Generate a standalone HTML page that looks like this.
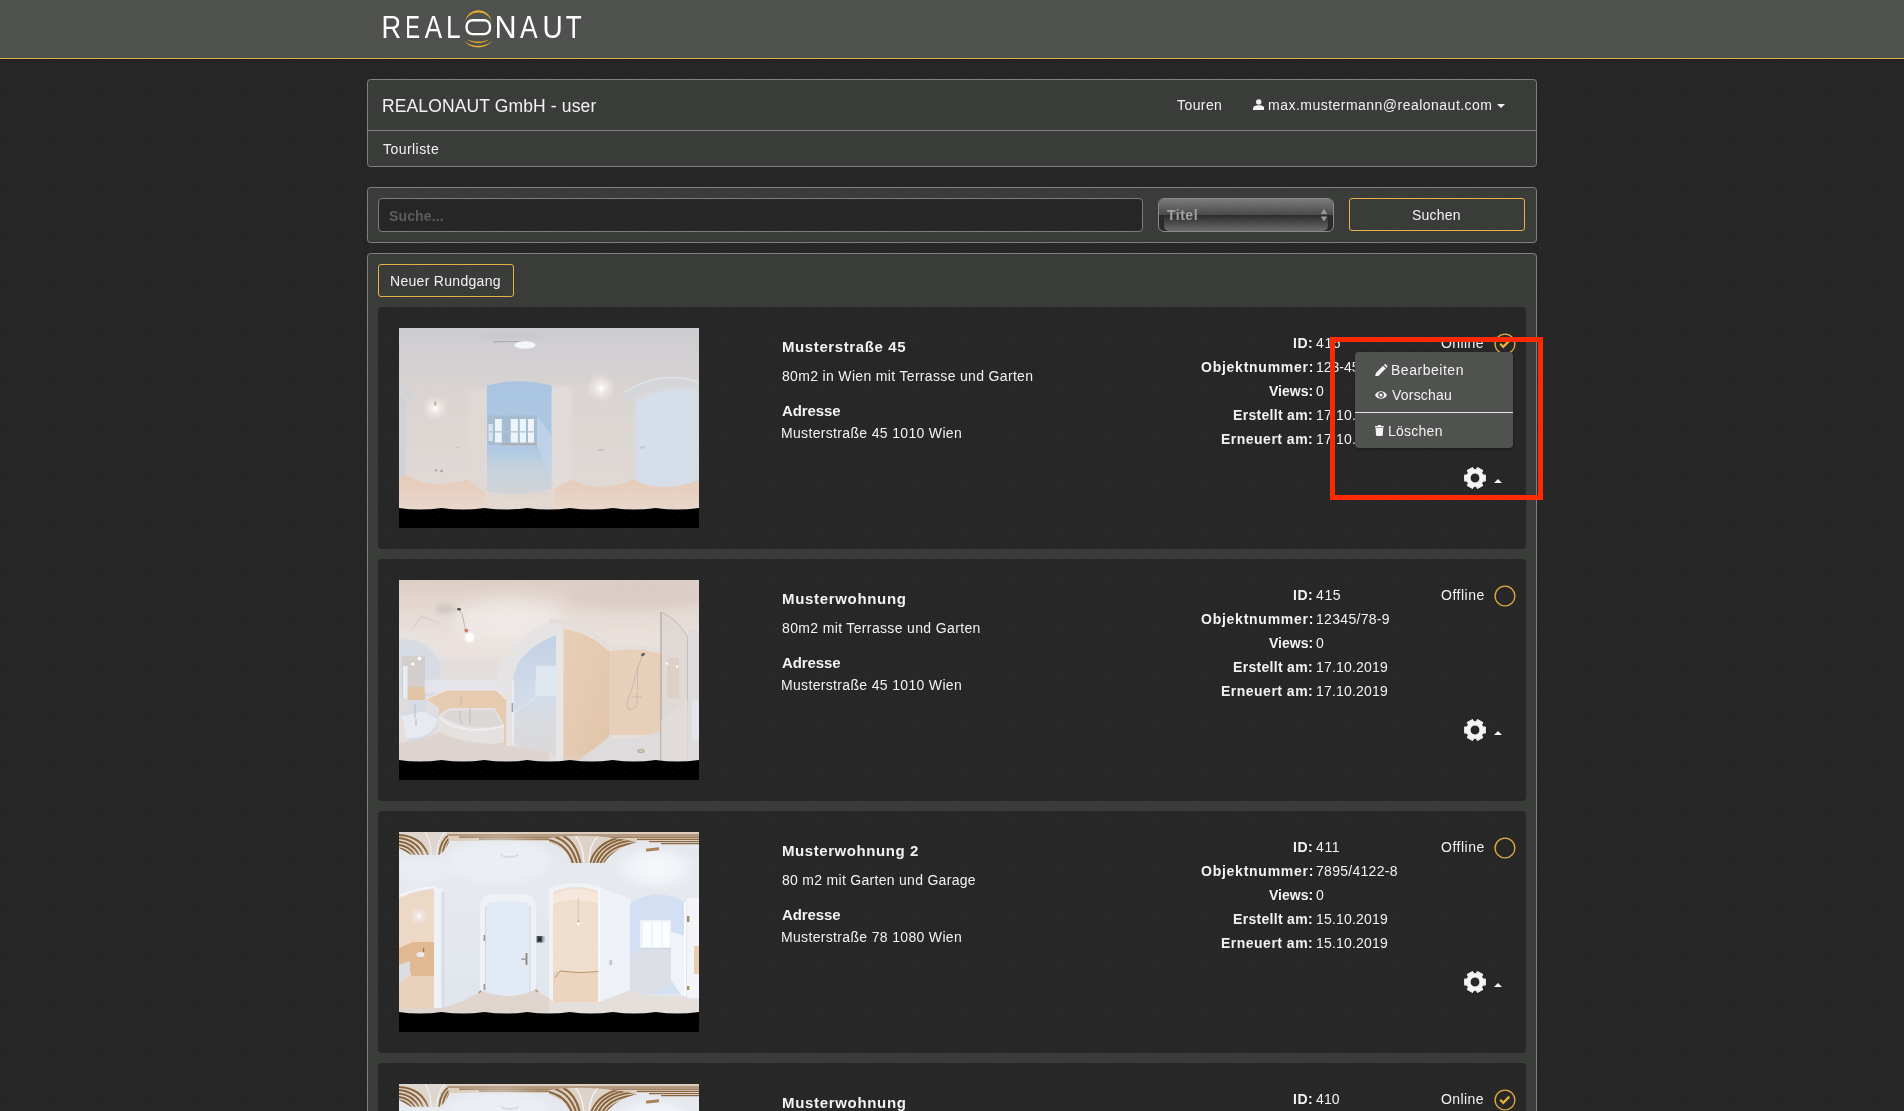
<!DOCTYPE html>
<html lang="de"><head><meta charset="utf-8"><title>REALONAUT - Tourliste</title>
<style>
html,body{margin:0;padding:0;}
body{width:1904px;height:1111px;overflow:hidden;position:relative;background:#262626;
 font-family:"Liberation Sans",sans-serif;color:#f2f2f2;}
.abs,.t{position:absolute;}
.t{white-space:nowrap;line-height:1;will-change:transform;}
#hdr{left:0;top:0;width:1904px;height:58px;background:#4f514e;}
#hdrline{left:0;top:58px;width:1904px;height:1px;background:#e3b34a;}
#hdrline2{left:0;top:59px;width:1904px;height:1px;background:#1d1f24;}
.panel{position:absolute;left:367px;width:1170px;box-sizing:border-box;border:1px solid #808080;border-radius:3.5px;background:#3a3c3a;}
.card{position:absolute;left:378px;width:1148px;height:242px;background:#272727;border-radius:4px;}
.thumb{position:absolute;left:399px;width:300px;height:200px;background:#d9d4d4;overflow:hidden;}
.btn{position:absolute;box-sizing:border-box;border:1px solid #e3b34a;border-radius:3px;background:#3a3c3a;}
</style></head><body>
<svg width="0" height="0" style="position:absolute"><defs>
<filter id="b05" x="-20%" y="-20%" width="140%" height="140%"><feGaussianBlur stdDeviation="0.5"/></filter>
<filter id="b1" x="-20%" y="-20%" width="140%" height="140%"><feGaussianBlur stdDeviation="1"/></filter>
<filter id="b2" x="-30%" y="-30%" width="160%" height="160%"><feGaussianBlur stdDeviation="2"/></filter>
<filter id="b4" x="-50%" y="-50%" width="200%" height="200%"><feGaussianBlur stdDeviation="4"/></filter>
<filter id="b8" x="-50%" y="-50%" width="200%" height="200%"><feGaussianBlur stdDeviation="8"/></filter>
<radialGradient id="glow"><stop offset="0" stop-color="#fff" stop-opacity="1"/><stop offset="0.25" stop-color="#f4ece8" stop-opacity=".85"/><stop offset="1" stop-color="#e6d8d0" stop-opacity="0"/></radialGradient>
<linearGradient id="i1bg" x1="0" y1="0" x2="0" y2="1"><stop offset="0" stop-color="#b6b4b9"/><stop offset=".17" stop-color="#bebabd"/><stop offset=".3" stop-color="#c6bebc"/><stop offset=".5" stop-color="#ccc2be"/><stop offset=".8" stop-color="#d0c6c1"/></linearGradient>
<linearGradient id="i1fl" x1="0" y1="0" x2="0" y2="1"><stop offset="0" stop-color="#d9b196"/><stop offset="1" stop-color="#dfc4b3"/></linearGradient>
<linearGradient id="i1door" x1="0" y1="0" x2="0" y2="1"><stop offset="0" stop-color="#7fa8d2"/><stop offset=".6" stop-color="#88afd6"/><stop offset=".75" stop-color="#a9bccd"/><stop offset="1" stop-color="#bbbfc3"/></linearGradient>
<path id="scal" d="M0 181.6 Q10 181.9 20.5 180.6 Q21.4 180 22.3 180.6 Q32 181.9 42.8 181.6 V200 H0Z"/>
</defs></svg>

<div class="abs" id="hdr"></div><div class="abs" id="hdrline"></div><div class="abs" id="hdrline2"></div>
<svg class="abs" style="left:0;top:0;will-change:transform;" width="620" height="58" viewBox="0 0 620 58" aria-label="REALONAUT">
<g fill="#ffffff" font-family="Liberation Sans, sans-serif"><text transform="translate(381.56 37.8) scale(0.863 1)" font-size="31.6">R</text><text transform="translate(405.18 37.8) scale(0.701 1)" font-size="31.6">E</text><text transform="translate(424.70 37.8) scale(0.823 1)" font-size="31.6">A</text><text transform="translate(446.05 37.8) scale(0.829 1)" font-size="31.6">L</text><text transform="translate(494.39 37.8) scale(0.969 1)" font-size="31.6">N</text><text transform="translate(519.95 37.8) scale(0.835 1)" font-size="31.6">A</text><text transform="translate(542.54 37.8) scale(0.886 1)" font-size="31.6">U</text><text transform="translate(565.66 37.8) scale(0.826 1)" font-size="31.6">T</text></g>
<rect x="466.6" y="20.2" width="23.4" height="13.9" rx="6" ry="6" fill="none" stroke="#ffffff" stroke-width="2.4"/>
<g fill="#e3ab33">
<path d="M464.9 22.2 C467.5 6.2 489.3 6.2 491.9 22.2 C487.6 9.4 469.2 9.4 464.9 22.2Z"/>
<path d="M464.3 41.0 C470.5 49.6 486.0 49.6 492.0 41.0 C486.0 47.3 470.5 47.3 464.3 41.0Z"/>
<path d="M467.0 39.2 C472.5 44.2 484.0 44.2 489.0 39.2 C484.0 42.4 472.5 42.4 467.0 39.2Z"/>
</g></svg>
<div class="panel" style="top:79px;height:88px;"></div>
<div class="abs" style="left:368px;top:130px;width:1168px;height:1px;background:#808080;"></div>
<div class="t" id="title" style="top:97.99px;font-size:17.5px;color:#f2f2f2;letter-spacing:0.127px;left:382.00px;">REALONAUT GmbH - user</div>
<div class="t" id="tourliste" style="top:142.15px;font-size:14px;color:#f2f2f2;letter-spacing:0.450px;left:382.50px;">Tourliste</div>
<div class="t" id="touren" style="top:98.15px;font-size:14px;color:#f2f2f2;letter-spacing:0.420px;left:1177.40px;">Touren</div>
<svg class="abs" style="left:1252.6px;top:99.2px;" width="11.5" height="11" viewBox="0 0 11.5 11"><circle cx="5.75" cy="2.9" r="2.7" fill="#f2f2f2"/><path d="M0 11 V9.6 C0 7.4 2.2 6.3 5.75 6.3 C9.3 6.3 11.5 7.4 11.5 9.6 V11Z" fill="#f2f2f2"/></svg>
<div class="t" id="email" style="top:98.15px;font-size:14px;color:#f2f2f2;letter-spacing:0.480px;left:1267.60px;">max.mustermann@realonaut.com</div>
<div class="abs" style="left:1497px;top:104px;width:0;height:0;border-left:4px solid transparent;border-right:4px solid transparent;border-top:4px solid #f2f2f2;"></div>
<div class="panel" style="top:187px;height:56px;"></div>
<div class="abs" style="left:378px;top:198px;width:765px;height:34px;box-sizing:border-box;border:1px solid #7d7d7d;border-radius:4px;background:#262626;"></div>
<div class="t" id="suche" style="top:208.75px;font-size:14px;color:#5c5c5c;font-weight:700;letter-spacing:0.143px;left:389.20px;">Suche...</div>
<div class="abs" style="left:1158px;top:198px;width:176px;height:34px;box-sizing:border-box;border:1px solid #8a8a8a;border-radius:6px;overflow:hidden;background:#2a2a2a;">
<div class="abs" style="left:0;top:0;width:174px;height:16px;background:linear-gradient(#7b7b7b,#4a4a4a);"></div>
<div class="abs" style="left:5px;top:16px;width:164px;height:16px;border-radius:0 0 5px 5px;background:linear-gradient(#2b2b2b,#6a6a6a);"></div>
<svg class="abs" style="left:161px;top:9px;" width="8" height="15" viewBox="0 0 8 15"><path d="M4 0.8 L7.2 6 H0.8Z M4 13.6 L0.8 8.4 H7.2Z" fill="#999"/></svg>
</div>
<div class="t" id="titel" style="top:207.90px;font-size:14px;color:#a2a2a2;font-weight:700;letter-spacing:0.500px;left:1167.00px;">Titel</div>
<div class="btn" style="left:1349px;top:198px;width:176px;height:33px;"></div>
<div class="t" id="suchen" style="top:208.15px;font-size:14px;color:#f2f2f2;letter-spacing:0.200px;left:1412.00px;">Suchen</div>
<div class="panel" style="top:253px;height:900px;"></div>
<div class="btn" style="left:378px;top:264px;width:136px;height:33px;"></div>
<div class="t" id="neuer" style="top:274.40px;font-size:14px;color:#f2f2f2;letter-spacing:0.300px;left:390.20px;">Neuer Rundgang</div>
<div class="card" style="top:307px;"></div>
<div class="thumb" style="top:328px;"><svg width="300" height="200" viewBox="0 0 300 200" style="display:block">
<rect width="300" height="200" fill="url(#i1bg)"/>
<!-- ceiling shading -->
<ellipse cx="112" cy="8" rx="34" ry="5" fill="#aeadb3" opacity=".7" filter="url(#b2)"/>
<path d="M94 14.2 Q108 12.6 124 14" stroke="#77726f" stroke-width="1.3" fill="none" filter="url(#b05)" opacity=".75"/>
<ellipse cx="126" cy="17" rx="10.5" ry="3.8" fill="#edf3fb" filter="url(#b05)"/>
<!-- far-left doorway -->
<path d="M0 56 Q10 58 16 70 L10 72 Q6 64 0 62Z" fill="#bdbdc3" filter="url(#b05)"/>
<rect x="0" y="68" width="7" height="84" fill="#b7bcc6" filter="url(#b1)"/>
<!-- right room under arch -->
<path d="M236 200 V72 Q262 55 300 61 V200Z" fill="#c2cede" filter="url(#b2)"/>
<path d="M224 66 Q262 40 300 55 L300 62 Q262 50 232 71Z" fill="#c0c2c8" filter="url(#b05)"/>
<path d="M224 65 Q262 40.5 300 54.5" stroke="#d4d8de" stroke-width="1.2" fill="none" filter="url(#b05)"/>
<!-- walls light areas -->
<rect x="152" y="58" width="20" height="108" fill="#d3cac6" filter="url(#b2)"/>
<rect x="70" y="62" width="18" height="100" fill="#d0c6c1" filter="url(#b2)"/>
<!-- lamps -->
<circle cx="36" cy="80" r="13" fill="url(#glow)"/>
<rect x="35" y="73.5" width="2.4" height="4" fill="#b08a70" filter="url(#b05)"/>
<circle cx="202" cy="60" r="15" fill="url(#glow)"/>
<circle cx="201.8" cy="61.8" r="1.3" fill="#fff"/>
<!-- floor -->
<path d="M0 150.5 L7.2 146.4 Q22 156.5 38.7 155.8 Q54 155.5 68.4 151.8 Q78 158 85.5 164 L88 164 V182 H0Z" fill="url(#i1fl)"/>
<path d="M153 162.5 Q164 156 171.6 151.4 Q186 159 204 158.5 Q221 158 234.7 151.4 Q250 159.5 267 159 Q285 158 300 152 V182 H153Z" fill="url(#i1fl)"/>
<rect x="86" y="163" width="70" height="19" fill="#d6c6bd"/>
<!-- blue doorway -->
<path d="M88 166 V57.5 Q118 49 152.5 57.5 V162 Q120 171 88 166Z" fill="url(#i1door)"/>
<path d="M88 163 Q120 170.5 153 160.5 L153 167 Q120 175 88 168Z" fill="#d3c4bb" filter="url(#b05)"/>
<!-- window -->
<rect x="88.6" y="87.5" width="49.5" height="29.5" fill="#7b9bba"/>
<g fill="#e4effb"><rect x="96" y="91" width="6.8" height="23.5"/><rect x="111.7" y="91" width="7.2" height="23.5"/><rect x="120.8" y="91" width="6.2" height="23.5"/><rect x="129" y="91" width="6" height="23.5"/><rect x="89.4" y="96" width="4.4" height="17" opacity=".7"/></g>
<rect x="88.6" y="103" width="49.5" height="1.6" fill="#88a6c3" opacity=".8"/>
<rect x="103" y="115.6" width="35" height="1.6" fill="#8c7f78"/>
<path d="M138 88 L152.5 108 V150 L138 117Z" fill="#a7c2dd" opacity=".7"/>
<!-- outlets -->
<circle cx="36.8" cy="142.3" r="1.1" fill="#6e6a68"/><circle cx="42.6" cy="143" r="1.2" fill="#6e6a68"/>
<rect x="56" y="118.6" width="5" height="1.6" fill="#b5aba6"/><rect x="199" y="121" width="6" height="2" fill="#aaa4a3"/><rect x="241" y="118.5" width="5" height="2" fill="#a9acb3"/>
<rect class="veil" width="300" height="184" fill="#fff" opacity="0.33"/>
<path d="M-0.3 179.9 Q21.1 183.3 42.5 179.9 Q63.9 183.3 85.4 179.9 Q106.8 183.3 128.2 179.9 Q149.6 183.3 171.0 179.9 Q192.4 183.3 213.8 179.9 Q235.3 183.3 256.7 179.9 Q278.1 183.3 299.5 179.9 H301 V200 H-1Z" fill="#000"/>
</svg></div>
<div class="t" id="c0title" style="top:338.90px;font-size:15px;color:#f2f2f2;font-weight:700;letter-spacing:0.607px;left:781.75px;">Musterstraße 45</div>
<div class="t" id="c0desc" style="top:368.75px;font-size:14px;color:#f2f2f2;letter-spacing:0.332px;left:782.00px;">80m2 in Wien mit Terrasse und Garten</div>
<div class="t" id="c0adr" style="top:403.20px;font-size:15px;color:#f2f2f2;font-weight:700;letter-spacing:-0.082px;left:782.00px;">Adresse</div>
<div class="t" id="c0addr" style="top:426.05px;font-size:14px;color:#f2f2f2;letter-spacing:0.333px;left:781.00px;">Musterstraße 45 1010 Wien</div>
<div class="t" id="c0l0" style="top:336.15px;font-size:14px;color:#f2f2f2;font-weight:700;letter-spacing:0.500px;right:590.50px;">ID:</div>
<div class="t" id="c0v0" style="top:336.15px;font-size:14px;color:#f2f2f2;letter-spacing:0.600px;left:1316.10px;">416</div>
<div class="t" id="c0l1" style="top:360.15px;font-size:14px;color:#f2f2f2;font-weight:700;letter-spacing:0.750px;right:590.25px;">Objektnummer:</div>
<div class="t" id="c0v1" style="top:360.15px;font-size:14px;color:#f2f2f2;left:1316.30px;">123-456</div>
<div class="t" id="c0l2" style="top:384.15px;font-size:14px;color:#f2f2f2;font-weight:700;right:591.00px;">Views:</div>
<div class="t" id="c0v2" style="top:384.15px;font-size:14px;color:#f2f2f2;left:1316.10px;">0</div>
<div class="t" id="c0l3" style="top:408.15px;font-size:14px;color:#f2f2f2;font-weight:700;letter-spacing:0.307px;right:590.69px;">Erstellt am:</div>
<div class="t" id="c0v3" style="top:408.15px;font-size:14px;color:#f2f2f2;letter-spacing:0.199px;left:1316.10px;">17.10.2019</div>
<div class="t" id="c0l4" style="top:432.15px;font-size:14px;color:#f2f2f2;font-weight:700;letter-spacing:0.489px;right:590.51px;">Erneuert am:</div>
<div class="t" id="c0v4" style="top:432.15px;font-size:14px;color:#f2f2f2;letter-spacing:0.199px;left:1316.10px;">17.10.2019</div>
<div class="t" id="c0st" style="top:336.15px;font-size:14px;color:#f2f2f2;letter-spacing:0.400px;right:419.70px;">Online</div>
<svg class="abs" style="left:1494px;top:332.5px;" width="22" height="22" viewBox="0 0 22 22"><circle cx="11" cy="11" r="9.9" fill="none" stroke="#e0aa3c" stroke-width="1.35"/><path d="M6.2 10.8 L9.3 13.9 L15.3 7.6" fill="none" stroke="#e6b03a" stroke-width="2.3"/></svg>
<svg class="abs" style="left:1463.3px;top:465.55px;" width="24" height="24" viewBox="0 0 24 24"><path d="M19.82 8.92 L22.31 9.14 L22.31 14.86 L19.82 15.08 L18.57 17.23 L19.63 19.50 L14.68 22.36 L13.24 20.31 L10.76 20.31 L9.32 22.36 L4.37 19.50 L5.43 17.23 L4.18 15.08 L1.69 14.86 L1.69 9.14 L4.18 8.92 L5.43 6.77 L4.37 4.50 L9.32 1.64 L10.76 3.69 L13.24 3.69 L14.68 1.64 L19.63 4.50 L18.57 6.77Z M7.00 12.00 a5.0 5.0 0 1 0 10.0 0 a5.0 5.0 0 1 0 -10.0 0Z" fill="#f4f4f4" fill-rule="evenodd" stroke="#f4f4f4" stroke-width="1.1" stroke-linejoin="round"/></svg>
<div class="abs" style="left:1494px;top:478.7px;width:0;height:0;border-left:4.2px solid transparent;border-right:4.2px solid transparent;border-bottom:4.4px solid #f4f4f4;"></div>
<div class="card" style="top:559px;"></div>
<div class="thumb" style="top:580px;"><svg width="300" height="200" viewBox="0 0 300 200" style="display:block">
<defs>
<linearGradient id="i2bg" x1="0" y1="0" x2="0" y2="1"><stop offset="0" stop-color="#d5c2b8"/><stop offset=".12" stop-color="#ddcdc5"/><stop offset=".28" stop-color="#e5d9d3"/><stop offset=".5" stop-color="#e5dcd7"/><stop offset="1" stop-color="#ddd3ce"/></linearGradient>
<linearGradient id="i2p" x1="0" y1="0" x2="1" y2="1"><stop offset="0" stop-color="#e4c3a4"/><stop offset="1" stop-color="#d9b796"/></linearGradient>
<linearGradient id="i2d" x1="0" y1="0" x2="0" y2="1"><stop offset="0" stop-color="#b4c7df"/><stop offset=".5" stop-color="#c6d3e4"/><stop offset=".7" stop-color="#cfd3da"/><stop offset="1" stop-color="#d2cfd0"/></linearGradient>
</defs>
<rect width="300" height="200" fill="url(#i2bg)"/>
<!-- ceiling shadow + lamp -->
<ellipse cx="47" cy="29" rx="11" ry="5" fill="#bfb4b0" opacity=".8" filter="url(#b2)"/>
<ellipse cx="236" cy="16" rx="70" ry="14" fill="#cbbbb4" opacity=".6" filter="url(#b4)"/><ellipse cx="110" cy="40" rx="55" ry="20" fill="#efeae8" opacity=".7" filter="url(#b8)"/>
<!-- left arch + blueish wall -->
<path d="M0 60 Q26 56 42 76 V135 H0Z" fill="#cdd3dd" filter="url(#b1)"/>
<path d="M0 50 Q28 50 44 76 L40 80 Q26 58 0 58Z" fill="#e0dbd9" filter="url(#b05)"/>
<path d="M14 48 L23 36 L40 43" stroke="#bfb4b0" stroke-width=".8" fill="none"/>
<!-- mirror -->
<rect x="3" y="76" width="23" height="44" fill="#c9c2c0"/>
<rect x="8" y="107" width="18" height="13" fill="#dbb691"/>
<rect x="4" y="86" width="4.5" height="40" fill="#e3e8f2"/>
<circle cx="20.5" cy="78.5" r="2" fill="#fff" filter="url(#b05)"/><circle cx="13.8" cy="84" r="1.6" fill="#fff" filter="url(#b05)"/>
<!-- center-left wall -->
<rect x="42" y="78" width="58" height="34" fill="#dcd6d4" filter="url(#b2)"/>
<rect x="26" y="100" width="84" height="13" fill="#dcdfe6" filter="url(#b1)"/>
<!-- peach tile band -->
<path d="M27 119 L47 110 H98 L107 119 V165 H98 V137 H40 V128Z" fill="#e2be9e"/>
<path d="M27 119 L47 110 H98 L107 119" stroke="#ebe6e4" stroke-width="1.2" fill="none"/>
<path d="M27 119 L40 128 V150 L27 140Z" fill="#d6d6dc"/>
<!-- bathtub -->
<path d="M40 136 Q45 129 52 128 H96 L105 145 V163 Q75 166 58 158 Q44 150 40 136Z" fill="#dedad9"/>
<path d="M43 136 Q48 131 53 130.5 H95 L103 145 Q80 150 62 145 Q50 141 43 136Z" fill="#d3cecd"/>
<path d="M40 137 Q52 148 70 149.5 Q90 150.5 105 146" stroke="#ebe9ea" stroke-width="2" fill="none"/>
<path d="M62 116 V126 M71 128 V144 M61 131 Q60 140 64 144" stroke="#a79c94" stroke-width=".7" fill="none"/>
<!-- sink -->
<path d="M3 137 L25 131 L39 140 Q36 152 22 157 L8 159Z" fill="#e2e5ed"/>
<path d="M8 159 L22 157 Q36 152 39 141 L39 147 Q34 158 8 163Z" fill="#cfd3dd"/>
<path d="M16 124 V138 M17 139 V146" stroke="#b8b2b0" stroke-width="1.2"/>
<rect x="0" y="118" width="9" height="14" fill="#d8d4d4"/>
<!-- floor -->
<path d="M0 163 Q20 162 40 152 Q60 163 105 165 L150 168 V182 H0Z" fill="#d5cac5"/>
<!-- door: frame + blue -->
<path d="M108 166 V113 L98.5 102 Q103 62 150 43 H158 L165 50 V168Z" fill="#dfdcdc"/>
<path d="M114 100 Q118 70 157 55 V174 Q135 172 114 163Z" fill="url(#i2d)"/>
<path d="M114 100 V163" stroke="#e6e8ee" stroke-width="2.2"/>
<path d="M114 133 L137 118 V100" stroke="#e2e6ee" stroke-width="1" fill="none" opacity=".8"/>
<rect x="137" y="86" width="20" height="30" fill="#dfe7f2" opacity=".75" filter="url(#b05)"/>
<rect x="112.6" y="123" width="1.6" height="9" fill="#8d8a8c"/>
<!-- door frame right (white) -->
<path d="M157 52 L164.5 49 V182 H157Z" fill="#e1dfe0"/>
<!-- big peach panel -->
<path d="M164.5 49 Q190 52 209.5 71 V182 H164.5Z" fill="url(#i2p)"/>
<!-- cornice -->
<path d="M150 41 Q188 42 210 68 Q238 64 262 72" stroke="#ddd6d2" stroke-width="4.5" fill="none" filter="url(#b05)"/>
<!-- shower wall -->
<path d="M209.5 71 Q238 67 262 74 V155 H209.5Z" fill="#e3c4a8"/>
<path d="M209.5 71 V157" stroke="#cfb29b" stroke-width="1" opacity=".7"/>
<!-- shower tray -->
<path d="M184 176 Q200 166 209.5 157 Q232 163 262 151 V182 H180Z" fill="#d6d3d4"/>
<path d="M164.5 176 H186 L180 182 H164.5Z" fill="#d9c2b0"/>
<ellipse cx="242" cy="171" rx="3.6" ry="2.2" fill="#a8987f"/><ellipse cx="242" cy="171" rx="2" ry="1.1" fill="#cbbfae"/>
<!-- shower fittings -->
<ellipse cx="244" cy="74.5" rx="2.2" ry="1.4" fill="#3c3a38" transform="rotate(-35 244 74.5)"/>
<path d="M243 76 Q236 96 232 112 Q224 128 232 130 Q240 128 238 112 M238.5 86 V110 M233 117 H243" stroke="#b3a69d" stroke-width=".9" fill="none"/>
<!-- glass -->
<path d="M262 32 Q280 40 288.6 57 V182 H262Z" fill="#d0c8c5" opacity=".55"/>
<path d="M262 32 V182" stroke="#8e8078" stroke-width="1"/>
<path d="M262 32 Q280 40 288.6 57 V182" stroke="#aaa09b" stroke-width=".8" fill="none"/>
<path d="M262 140 L289 120 V182 H262Z" fill="#dcd7d6" opacity=".6"/>
<rect x="268" y="78" width="12" height="40" fill="#d6c0ae" opacity=".7" filter="url(#b05)"/>
<circle cx="268" cy="83.5" r="1.2" fill="#fff"/><circle cx="278" cy="86.5" r="1.2" fill="#fff"/>
<!-- far right -->
<rect x="289" y="50" width="11" height="132" fill="#d8d3d2"/>
<rect x="293" y="120" width="7" height="40" fill="#dfe2ea" opacity=".8"/>
<!-- hanging lamp -->
<path d="M60 29.5 Q64 34 64.5 40 Q65 46 67 49.5" stroke="#9b938f" stroke-width=".8" fill="none"/>
<ellipse cx="60" cy="29.3" rx="2" ry="1.2" fill="#1d1b1a"/>
<path d="M65.5 49 L69.5 49.5 L68.5 52.5 L66 52.3Z" fill="#b0482a"/>
<circle cx="70.6" cy="57.2" r="5.6" fill="#fff" opacity=".55" filter="url(#b1)"/><circle cx="70.6" cy="57.2" r="3.9" fill="#fff"/>
<rect class="veil" width="300" height="184" fill="#fff" opacity="0.2"/>
<path d="M-0.3 179.9 Q21.1 183.3 42.5 179.9 Q63.9 183.3 85.4 179.9 Q106.8 183.3 128.2 179.9 Q149.6 183.3 171.0 179.9 Q192.4 183.3 213.8 179.9 Q235.3 183.3 256.7 179.9 Q278.1 183.3 299.5 179.9 H301 V200 H-1Z" fill="#000"/>
</svg></div>
<div class="t" id="c1title" style="top:590.90px;font-size:15px;color:#f2f2f2;font-weight:700;letter-spacing:0.676px;left:781.75px;">Musterwohnung</div>
<div class="t" id="c1desc" style="top:620.75px;font-size:14px;color:#f2f2f2;letter-spacing:0.351px;left:782.00px;">80m2 mit Terrasse und Garten</div>
<div class="t" id="c1adr" style="top:655.20px;font-size:15px;color:#f2f2f2;font-weight:700;letter-spacing:-0.082px;left:782.00px;">Adresse</div>
<div class="t" id="c1addr" style="top:678.05px;font-size:14px;color:#f2f2f2;letter-spacing:0.333px;left:781.00px;">Musterstraße 45 1010 Wien</div>
<div class="t" id="c1l0" style="top:588.15px;font-size:14px;color:#f2f2f2;font-weight:700;letter-spacing:0.500px;right:590.50px;">ID:</div>
<div class="t" id="c1v0" style="top:588.15px;font-size:14px;color:#f2f2f2;letter-spacing:0.600px;left:1316.10px;">415</div>
<div class="t" id="c1l1" style="top:612.15px;font-size:14px;color:#f2f2f2;font-weight:700;letter-spacing:0.750px;right:590.25px;">Objektnummer:</div>
<div class="t" id="c1v1" style="top:612.15px;font-size:14px;color:#f2f2f2;letter-spacing:0.310px;left:1316.10px;">12345/78-9</div>
<div class="t" id="c1l2" style="top:636.15px;font-size:14px;color:#f2f2f2;font-weight:700;right:591.00px;">Views:</div>
<div class="t" id="c1v2" style="top:636.15px;font-size:14px;color:#f2f2f2;left:1316.10px;">0</div>
<div class="t" id="c1l3" style="top:660.15px;font-size:14px;color:#f2f2f2;font-weight:700;letter-spacing:0.307px;right:590.69px;">Erstellt am:</div>
<div class="t" id="c1v3" style="top:660.15px;font-size:14px;color:#f2f2f2;letter-spacing:0.199px;left:1316.10px;">17.10.2019</div>
<div class="t" id="c1l4" style="top:684.15px;font-size:14px;color:#f2f2f2;font-weight:700;letter-spacing:0.489px;right:590.51px;">Erneuert am:</div>
<div class="t" id="c1v4" style="top:684.15px;font-size:14px;color:#f2f2f2;letter-spacing:0.199px;left:1316.10px;">17.10.2019</div>
<div class="t" id="c1st" style="top:588.15px;font-size:14px;color:#f2f2f2;letter-spacing:0.500px;right:419.60px;">Offline</div>
<svg class="abs" style="left:1494px;top:584.5px;" width="22" height="22" viewBox="0 0 22 22"><circle cx="11" cy="11" r="9.9" fill="none" stroke="#e0aa3c" stroke-width="1.35"/></svg>
<svg class="abs" style="left:1463.3px;top:717.55px;" width="24" height="24" viewBox="0 0 24 24"><path d="M19.82 8.92 L22.31 9.14 L22.31 14.86 L19.82 15.08 L18.57 17.23 L19.63 19.50 L14.68 22.36 L13.24 20.31 L10.76 20.31 L9.32 22.36 L4.37 19.50 L5.43 17.23 L4.18 15.08 L1.69 14.86 L1.69 9.14 L4.18 8.92 L5.43 6.77 L4.37 4.50 L9.32 1.64 L10.76 3.69 L13.24 3.69 L14.68 1.64 L19.63 4.50 L18.57 6.77Z M7.00 12.00 a5.0 5.0 0 1 0 10.0 0 a5.0 5.0 0 1 0 -10.0 0Z" fill="#f4f4f4" fill-rule="evenodd" stroke="#f4f4f4" stroke-width="1.1" stroke-linejoin="round"/></svg>
<div class="abs" style="left:1494px;top:730.7px;width:0;height:0;border-left:4.2px solid transparent;border-right:4.2px solid transparent;border-bottom:4.4px solid #f4f4f4;"></div>
<div class="card" style="top:811px;"></div>
<div class="thumb" style="top:832px;"><svg width="300" height="200" viewBox="0 0 300 200" style="display:block">
<defs>
<linearGradient id="i3bg" x1="0" y1="0" x2="0" y2="1"><stop offset="0" stop-color="#e4e7ec"/><stop offset=".3" stop-color="#e6e9ee"/><stop offset=".6" stop-color="#e3e7ee"/><stop offset="1" stop-color="#e0e5ec"/></linearGradient>
<radialGradient id="i3c"><stop offset="0" stop-color="#f7f9fc"/><stop offset=".6" stop-color="#eef1f6"/><stop offset="1" stop-color="#e6e9ee" stop-opacity="0"/></radialGradient>
<clipPath id="i3clipL"><path d="M0 0 H48 L50 10 Q46 20 40 23 H12 Q4 18 0 16Z"/></clipPath>
<clipPath id="i3clipM"><path d="M150 6 Q190 0 238 10 Q215 16 205 31 H172 Q168 16 150 10Z"/></clipPath>
</defs>
<rect width="300" height="200" fill="url(#i3bg)"/>
<!-- top slat band -->
<rect x="0" y="0" width="300" height="9" fill="#dccdbd"/>
<g stroke="#8a6742" stroke-width="1.2"><path d="M48 3 H300 M60 5.2 H300 M80 7.2 H150 M238 7.4 H300 M250 9.6 H300 M262 11.6 H300"/></g>
<!-- left fan -->
<g clip-path="url(#i3clipL)"><rect x="0" y="0" width="52" height="24" fill="#ddd5ce"/>
<g stroke="#8a643a" stroke-width="1.9" fill="none"><path d="M0 6 Q18 8 24 23 M0 9.5 Q14 11 20 23 M0 13 Q10 14 16 23 M0 16.5 Q7 17.5 12 23 M0 3 Q22 4 29 23"/><path d="M52 2 Q42 6 40 23 M52 5 Q45 9 43.5 23 M52 8 Q48 11 47 23"/></g>
<path d="M26 0 Q32 8 32 23 M38 23 Q38 8 46 0" stroke="#f1f1f3" stroke-width="1.2" fill="none"/>
</g>
<!-- middle fan -->
<g clip-path="url(#i3clipM)"><rect x="150" y="0" width="90" height="32" fill="#dcd2c8"/>
<g stroke="#8a643a" stroke-width="2.0" fill="none"><path d="M150 8 Q168 12 174 31 M150 11.5 Q164 15 170.5 31 M156 5 Q172 10 178 31 M164 4 Q177 10 181.5 31"/>
<path d="M238 8 Q206 10 198 31 M238 11 Q210 13 201.5 31 M232 6 Q202 9 194.5 31 M224 5 Q198 9 191 31 M238 14 Q214 16 205 31"/></g>
<path d="M176 3 Q184 12 185 31 M190 31 Q190 12 200 3" stroke="#f3f3f5" stroke-width="1.3" fill="none"/>
</g>
<!-- ceiling highlights -->
<ellipse cx="100" cy="30" rx="52" ry="22" fill="#ebeef3" filter="url(#b4)"/>
<ellipse cx="256" cy="36" rx="48" ry="25" fill="url(#i3c)"/>
<ellipse cx="25" cy="38" rx="30" ry="14" fill="#e9ecf1" filter="url(#b4)"/>
<ellipse cx="110.7" cy="22.5" rx="9" ry="3.6" fill="#d6dae2" filter="url(#b05)"/><ellipse cx="110.7" cy="21.5" rx="8" ry="2.6" fill="#eceff4" filter="url(#b05)"/>
<rect x="247" y="16" width="13" height="3" fill="#a58458" transform="rotate(-6 253 17)" filter="url(#b05)"/>
<!-- left peach room -->
<path d="M0 66 Q18 58 35 57 V176 H0Z" fill="#edd8c6"/>
<path d="M0 64 Q18 56 36 55" stroke="#f4f6fa" stroke-width="2" fill="none"/>
<circle cx="20" cy="84" r="11" fill="url(#glow)"/>
<path d="M0 116 L14 110 H35 V150 H12 V140 L0 148Z" fill="#e0b993"/>
<path d="M0 133 L11 129 V142 L0 152Z" fill="#dcdde2"/>
<path d="M0 152 L12 144 H35 V176 H0Z" fill="#e8d0bb"/>
<ellipse cx="21.5" cy="122.5" rx="4" ry="2.6" fill="#ebe9ea"/><rect x="24" y="116" width="1.2" height="4" fill="#8b7a6a"/>
<!-- frames / walls -->
<rect x="35" y="56" width="7.5" height="120" fill="#eef1f6"/>
<rect x="42.5" y="60" width="3" height="116" fill="#d8dee7"/>
<!-- main door -->
<path d="M81 160 V76 Q81 63 93 62 H125 Q137 63 137 76 V160Z" fill="#eef1f6"/>
<path d="M86.5 166 V77 Q86.5 70.5 93 70 Q108 68 124 70 Q131 70.5 131 77 V164Z" fill="#e2eaf5"/>
<path d="M86.5 74 V160 M131 74 V160" stroke="#c9d4e2" stroke-width=".8"/>
<rect x="84.6" y="103" width="1.6" height="6" fill="#9a948f"/><rect x="84.6" y="152" width="1.6" height="6" fill="#9a948f"/>
<rect x="126.6" y="121" width="1.8" height="12" fill="#8d8379"/><rect x="122.5" y="126.4" width="5" height="1.5" fill="#a09a96"/>
<rect x="137.6" y="104" width="6" height="6.5" fill="#50525a"/><rect x="139" y="105.4" width="3.2" height="3.6" fill="#2a2b30"/>
<rect x="144" y="104" width="1.6" height="6.5" fill="#aab7c8"/>
<!-- peach hallway -->
<path d="M150 56 Q178 46 205 56 V172 H150Z" fill="#eff2f7"/>
<path d="M154 100 V60 Q178 50 200 60 V172 H154Z" fill="#f0decd"/>
<path d="M154 62 Q178 52 200 62 V72 Q178 64 154 72Z" fill="#f6e9de" opacity=".8"/>
<path d="M154 140 Q160 138 164 138.5 Q180 141 200 139 V172 H154Z" fill="#ecd4bf"/>
<path d="M156 146 L161 139 Q180 142 200 139.5" stroke="#b08f68" stroke-width=".9" fill="none"/>
<path d="M179.2 66 V89" stroke="#b7a79a" stroke-width=".5"/><circle cx="179.3" cy="91.8" r="1.5" fill="#fff"/><rect x="178.7" y="88.6" width="1.2" height="1.6" fill="#a78a6a"/>
<!-- open white door + walls -->
<path d="M200 56 L231 66 V158 L203 172 H200Z" fill="#eef2f8"/>
<path d="M200 56 V172" stroke="#f8fafd" stroke-width="1.6"/>
<rect x="210.5" y="128" width="2.6" height="5" fill="#c2c4cc"/>
<!-- blue room -->
<path d="M231 72 Q240 64 258 62 Q276 64 286 70 V162 H231Z" fill="#d3e0f3"/>
<rect x="241" y="88" width="31" height="29" fill="#eef3fa"/>
<g fill="#fbfdff"><rect x="244" y="90" width="8" height="25"/><rect x="254" y="90" width="8" height="25"/><rect x="263.5" y="90" width="7" height="25"/></g>
<rect x="241" y="116" width="31" height="1.2" fill="#cfd7e2"/>
<path d="M231 125 Q236 119 241 118 H272 V150 Q262 164 240 161 L231 158Z" fill="#dcdfe5"/>
<path d="M272 100 L287 104 V163 L283 164 L272 148Z" fill="#f0f3f8"/>
<path d="M286 70 V164" stroke="#f8fafd" stroke-width="2"/>
<rect x="288" y="66" width="12" height="100" fill="#f2f4f8"/>
<rect x="295" y="114" width="5" height="28" fill="#e8cdb2"/>
<rect x="288" y="84" width="2.4" height="6" fill="#a88a62"/><rect x="288" y="154" width="2.4" height="4" fill="#b08f5e"/>
<!-- floor -->
<path d="M0 176 H43 Q66 170 82 158.5 Q96 163.5 110 164 Q124 163.5 136.5 157.5 Q143 163 150 166 V182 H0Z" fill="#dfd5ce"/>
<path d="M150 166 L154 170 H200 L231 158 Q250 166 283 164 L300 170 V182 H150Z" fill="#e5dfdc"/>
<path d="M82 158.5 L80 161 M136.5 157.5 L139 160" stroke="#a8957f" stroke-width="1.6"/>
<rect class="veil" width="300" height="184" fill="#fff" opacity="0"/>
<path d="M-0.3 179.9 Q21.1 183.3 42.5 179.9 Q63.9 183.3 85.4 179.9 Q106.8 183.3 128.2 179.9 Q149.6 183.3 171.0 179.9 Q192.4 183.3 213.8 179.9 Q235.3 183.3 256.7 179.9 Q278.1 183.3 299.5 179.9 H301 V200 H-1Z" fill="#000"/>
</svg></div>
<div class="t" id="c2title" style="top:842.90px;font-size:15px;color:#f2f2f2;font-weight:700;letter-spacing:0.572px;left:781.75px;">Musterwohnung 2</div>
<div class="t" id="c2desc" style="top:872.75px;font-size:14px;color:#f2f2f2;letter-spacing:0.293px;left:782.00px;">80 m2 mit Garten und Garage</div>
<div class="t" id="c2adr" style="top:907.20px;font-size:15px;color:#f2f2f2;font-weight:700;letter-spacing:-0.082px;left:782.00px;">Adresse</div>
<div class="t" id="c2addr" style="top:930.05px;font-size:14px;color:#f2f2f2;letter-spacing:0.333px;left:781.00px;">Musterstraße 78 1080 Wien</div>
<div class="t" id="c2l0" style="top:840.15px;font-size:14px;color:#f2f2f2;font-weight:700;letter-spacing:0.500px;right:590.50px;">ID:</div>
<div class="t" id="c2v0" style="top:840.15px;font-size:14px;color:#f2f2f2;letter-spacing:0.600px;left:1316.10px;">411</div>
<div class="t" id="c2l1" style="top:864.15px;font-size:14px;color:#f2f2f2;font-weight:700;letter-spacing:0.750px;right:590.25px;">Objektnummer:</div>
<div class="t" id="c2v1" style="top:864.15px;font-size:14px;color:#f2f2f2;letter-spacing:0.280px;left:1316.10px;">7895/4122-8</div>
<div class="t" id="c2l2" style="top:888.15px;font-size:14px;color:#f2f2f2;font-weight:700;right:591.00px;">Views:</div>
<div class="t" id="c2v2" style="top:888.15px;font-size:14px;color:#f2f2f2;left:1316.10px;">0</div>
<div class="t" id="c2l3" style="top:912.15px;font-size:14px;color:#f2f2f2;font-weight:700;letter-spacing:0.307px;right:590.69px;">Erstellt am:</div>
<div class="t" id="c2v3" style="top:912.15px;font-size:14px;color:#f2f2f2;letter-spacing:0.199px;left:1316.10px;">15.10.2019</div>
<div class="t" id="c2l4" style="top:936.15px;font-size:14px;color:#f2f2f2;font-weight:700;letter-spacing:0.489px;right:590.51px;">Erneuert am:</div>
<div class="t" id="c2v4" style="top:936.15px;font-size:14px;color:#f2f2f2;letter-spacing:0.199px;left:1316.10px;">15.10.2019</div>
<div class="t" id="c2st" style="top:840.15px;font-size:14px;color:#f2f2f2;letter-spacing:0.500px;right:419.60px;">Offline</div>
<svg class="abs" style="left:1494px;top:836.5px;" width="22" height="22" viewBox="0 0 22 22"><circle cx="11" cy="11" r="9.9" fill="none" stroke="#e0aa3c" stroke-width="1.35"/></svg>
<svg class="abs" style="left:1463.3px;top:969.55px;" width="24" height="24" viewBox="0 0 24 24"><path d="M19.82 8.92 L22.31 9.14 L22.31 14.86 L19.82 15.08 L18.57 17.23 L19.63 19.50 L14.68 22.36 L13.24 20.31 L10.76 20.31 L9.32 22.36 L4.37 19.50 L5.43 17.23 L4.18 15.08 L1.69 14.86 L1.69 9.14 L4.18 8.92 L5.43 6.77 L4.37 4.50 L9.32 1.64 L10.76 3.69 L13.24 3.69 L14.68 1.64 L19.63 4.50 L18.57 6.77Z M7.00 12.00 a5.0 5.0 0 1 0 10.0 0 a5.0 5.0 0 1 0 -10.0 0Z" fill="#f4f4f4" fill-rule="evenodd" stroke="#f4f4f4" stroke-width="1.1" stroke-linejoin="round"/></svg>
<div class="abs" style="left:1494px;top:982.7px;width:0;height:0;border-left:4.2px solid transparent;border-right:4.2px solid transparent;border-bottom:4.4px solid #f4f4f4;"></div>
<div class="card" style="top:1063px;"></div>
<div class="thumb" style="top:1084px;"><svg width="300" height="200" viewBox="0 0 300 200" style="display:block">
<defs>
<linearGradient id="j3bg" x1="0" y1="0" x2="0" y2="1"><stop offset="0" stop-color="#e4e7ec"/><stop offset=".3" stop-color="#e6e9ee"/><stop offset=".6" stop-color="#e3e7ee"/><stop offset="1" stop-color="#e0e5ec"/></linearGradient>
<radialGradient id="j3c"><stop offset="0" stop-color="#f7f9fc"/><stop offset=".6" stop-color="#eef1f6"/><stop offset="1" stop-color="#e6e9ee" stop-opacity="0"/></radialGradient>
<clipPath id="j3clipL"><path d="M0 0 H48 L50 10 Q46 20 40 23 H12 Q4 18 0 16Z"/></clipPath>
<clipPath id="j3clipM"><path d="M150 6 Q190 0 238 10 Q215 16 205 31 H172 Q168 16 150 10Z"/></clipPath>
</defs>
<rect width="300" height="200" fill="url(#j3bg)"/>
<!-- top slat band -->
<rect x="0" y="0" width="300" height="9" fill="#dccdbd"/>
<g stroke="#8a6742" stroke-width="1.2"><path d="M48 3 H300 M60 5.2 H300 M80 7.2 H150 M238 7.4 H300 M250 9.6 H300 M262 11.6 H300"/></g>
<!-- left fan -->
<g clip-path="url(#j3clipL)"><rect x="0" y="0" width="52" height="24" fill="#ddd5ce"/>
<g stroke="#8a643a" stroke-width="1.9" fill="none"><path d="M0 6 Q18 8 24 23 M0 9.5 Q14 11 20 23 M0 13 Q10 14 16 23 M0 16.5 Q7 17.5 12 23 M0 3 Q22 4 29 23"/><path d="M52 2 Q42 6 40 23 M52 5 Q45 9 43.5 23 M52 8 Q48 11 47 23"/></g>
<path d="M26 0 Q32 8 32 23 M38 23 Q38 8 46 0" stroke="#f1f1f3" stroke-width="1.2" fill="none"/>
</g>
<!-- middle fan -->
<g clip-path="url(#j3clipM)"><rect x="150" y="0" width="90" height="32" fill="#dcd2c8"/>
<g stroke="#8a643a" stroke-width="2.0" fill="none"><path d="M150 8 Q168 12 174 31 M150 11.5 Q164 15 170.5 31 M156 5 Q172 10 178 31 M164 4 Q177 10 181.5 31"/>
<path d="M238 8 Q206 10 198 31 M238 11 Q210 13 201.5 31 M232 6 Q202 9 194.5 31 M224 5 Q198 9 191 31 M238 14 Q214 16 205 31"/></g>
<path d="M176 3 Q184 12 185 31 M190 31 Q190 12 200 3" stroke="#f3f3f5" stroke-width="1.3" fill="none"/>
</g>
<!-- ceiling highlights -->
<ellipse cx="100" cy="30" rx="52" ry="22" fill="#ebeef3" filter="url(#b4)"/>
<ellipse cx="256" cy="36" rx="48" ry="25" fill="url(#j3c)"/>
<ellipse cx="25" cy="38" rx="30" ry="14" fill="#e9ecf1" filter="url(#b4)"/>
<ellipse cx="110.7" cy="22.5" rx="9" ry="3.6" fill="#d6dae2" filter="url(#b05)"/><ellipse cx="110.7" cy="21.5" rx="8" ry="2.6" fill="#eceff4" filter="url(#b05)"/>
<rect x="247" y="16" width="13" height="3" fill="#a58458" transform="rotate(-6 253 17)" filter="url(#b05)"/>
<!-- left peach room -->
<path d="M0 66 Q18 58 35 57 V176 H0Z" fill="#edd8c6"/>
<path d="M0 64 Q18 56 36 55" stroke="#f4f6fa" stroke-width="2" fill="none"/>
<circle cx="20" cy="84" r="11" fill="url(#glow)"/>
<path d="M0 116 L14 110 H35 V150 H12 V140 L0 148Z" fill="#e0b993"/>
<path d="M0 133 L11 129 V142 L0 152Z" fill="#dcdde2"/>
<path d="M0 152 L12 144 H35 V176 H0Z" fill="#e8d0bb"/>
<ellipse cx="21.5" cy="122.5" rx="4" ry="2.6" fill="#ebe9ea"/><rect x="24" y="116" width="1.2" height="4" fill="#8b7a6a"/>
<!-- frames / walls -->
<rect x="35" y="56" width="7.5" height="120" fill="#eef1f6"/>
<rect x="42.5" y="60" width="3" height="116" fill="#d8dee7"/>
<!-- main door -->
<path d="M81 160 V76 Q81 63 93 62 H125 Q137 63 137 76 V160Z" fill="#eef1f6"/>
<path d="M86.5 166 V77 Q86.5 70.5 93 70 Q108 68 124 70 Q131 70.5 131 77 V164Z" fill="#e2eaf5"/>
<path d="M86.5 74 V160 M131 74 V160" stroke="#c9d4e2" stroke-width=".8"/>
<rect x="84.6" y="103" width="1.6" height="6" fill="#9a948f"/><rect x="84.6" y="152" width="1.6" height="6" fill="#9a948f"/>
<rect x="126.6" y="121" width="1.8" height="12" fill="#8d8379"/><rect x="122.5" y="126.4" width="5" height="1.5" fill="#a09a96"/>
<rect x="137.6" y="104" width="6" height="6.5" fill="#50525a"/><rect x="139" y="105.4" width="3.2" height="3.6" fill="#2a2b30"/>
<rect x="144" y="104" width="1.6" height="6.5" fill="#aab7c8"/>
<!-- peach hallway -->
<path d="M150 56 Q178 46 205 56 V172 H150Z" fill="#eff2f7"/>
<path d="M154 100 V60 Q178 50 200 60 V172 H154Z" fill="#f0decd"/>
<path d="M154 62 Q178 52 200 62 V72 Q178 64 154 72Z" fill="#f6e9de" opacity=".8"/>
<path d="M154 140 Q160 138 164 138.5 Q180 141 200 139 V172 H154Z" fill="#ecd4bf"/>
<path d="M156 146 L161 139 Q180 142 200 139.5" stroke="#b08f68" stroke-width=".9" fill="none"/>
<path d="M179.2 66 V89" stroke="#b7a79a" stroke-width=".5"/><circle cx="179.3" cy="91.8" r="1.5" fill="#fff"/><rect x="178.7" y="88.6" width="1.2" height="1.6" fill="#a78a6a"/>
<!-- open white door + walls -->
<path d="M200 56 L231 66 V158 L203 172 H200Z" fill="#eef2f8"/>
<path d="M200 56 V172" stroke="#f8fafd" stroke-width="1.6"/>
<rect x="210.5" y="128" width="2.6" height="5" fill="#c2c4cc"/>
<!-- blue room -->
<path d="M231 72 Q240 64 258 62 Q276 64 286 70 V162 H231Z" fill="#d3e0f3"/>
<rect x="241" y="88" width="31" height="29" fill="#eef3fa"/>
<g fill="#fbfdff"><rect x="244" y="90" width="8" height="25"/><rect x="254" y="90" width="8" height="25"/><rect x="263.5" y="90" width="7" height="25"/></g>
<rect x="241" y="116" width="31" height="1.2" fill="#cfd7e2"/>
<path d="M231 125 Q236 119 241 118 H272 V150 Q262 164 240 161 L231 158Z" fill="#dcdfe5"/>
<path d="M272 100 L287 104 V163 L283 164 L272 148Z" fill="#f0f3f8"/>
<path d="M286 70 V164" stroke="#f8fafd" stroke-width="2"/>
<rect x="288" y="66" width="12" height="100" fill="#f2f4f8"/>
<rect x="295" y="114" width="5" height="28" fill="#e8cdb2"/>
<rect x="288" y="84" width="2.4" height="6" fill="#a88a62"/><rect x="288" y="154" width="2.4" height="4" fill="#b08f5e"/>
<!-- floor -->
<path d="M0 176 H43 Q66 170 82 158.5 Q96 163.5 110 164 Q124 163.5 136.5 157.5 Q143 163 150 166 V182 H0Z" fill="#dfd5ce"/>
<path d="M150 166 L154 170 H200 L231 158 Q250 166 283 164 L300 170 V182 H150Z" fill="#e5dfdc"/>
<path d="M82 158.5 L80 161 M136.5 157.5 L139 160" stroke="#a8957f" stroke-width="1.6"/>
<rect class="veil" width="300" height="184" fill="#fff" opacity="0"/>
<path d="M-0.3 179.9 Q21.1 183.3 42.5 179.9 Q63.9 183.3 85.4 179.9 Q106.8 183.3 128.2 179.9 Q149.6 183.3 171.0 179.9 Q192.4 183.3 213.8 179.9 Q235.3 183.3 256.7 179.9 Q278.1 183.3 299.5 179.9 H301 V200 H-1Z" fill="#000"/>
</svg></div>
<div class="t" id="c3title" style="top:1094.90px;font-size:15px;color:#f2f2f2;font-weight:700;letter-spacing:0.676px;left:781.75px;">Musterwohnung</div>
<div class="t" id="c3l0" style="top:1092.15px;font-size:14px;color:#f2f2f2;font-weight:700;letter-spacing:0.500px;right:590.50px;">ID:</div>
<div class="t" id="c3v0" style="top:1092.15px;font-size:14px;color:#f2f2f2;letter-spacing:0.100px;left:1316.10px;">410</div>
<div class="t" id="c3l2" style="top:1140.15px;font-size:14px;color:#f2f2f2;font-weight:700;right:592.00px;">Views:</div>
<div class="t" id="c3v2" style="top:1140.15px;font-size:14px;color:#f2f2f2;left:1316.30px;">0</div>
<div class="t" id="c3st" style="top:1092.15px;font-size:14px;color:#f2f2f2;letter-spacing:0.400px;right:419.70px;">Online</div>
<svg class="abs" style="left:1494px;top:1088.5px;" width="22" height="22" viewBox="0 0 22 22"><circle cx="11" cy="11" r="9.9" fill="none" stroke="#e0aa3c" stroke-width="1.35"/><path d="M6.2 10.8 L9.3 13.9 L15.3 7.6" fill="none" stroke="#e6b03a" stroke-width="2.3"/></svg>
<svg class="abs" style="left:1463.3px;top:1221.55px;" width="24" height="24" viewBox="0 0 24 24"><path d="M19.82 8.92 L22.31 9.14 L22.31 14.86 L19.82 15.08 L18.57 17.23 L19.63 19.50 L14.68 22.36 L13.24 20.31 L10.76 20.31 L9.32 22.36 L4.37 19.50 L5.43 17.23 L4.18 15.08 L1.69 14.86 L1.69 9.14 L4.18 8.92 L5.43 6.77 L4.37 4.50 L9.32 1.64 L10.76 3.69 L13.24 3.69 L14.68 1.64 L19.63 4.50 L18.57 6.77Z M7.00 12.00 a5.0 5.0 0 1 0 10.0 0 a5.0 5.0 0 1 0 -10.0 0Z" fill="#f4f4f4" fill-rule="evenodd" stroke="#f4f4f4" stroke-width="1.1" stroke-linejoin="round"/></svg>
<div class="abs" style="left:1494px;top:1234.7px;width:0;height:0;border-left:4.2px solid transparent;border-right:4.2px solid transparent;border-bottom:4.4px solid #f4f4f4;"></div>
<svg class="abs" style="left:0;top:0;pointer-events:none;" width="1904" height="1111" aria-hidden="true"><defs><pattern id="dots" width="48" height="48" patternUnits="userSpaceOnUse"><g fill="#ffffff" fill-opacity=".035"><rect x="1" y="4" width="1" height="1"/><rect x="1" y="29" width="1" height="1"/><rect x="3" y="4" width="1" height="1"/><rect x="3" y="12" width="1" height="1"/><rect x="3" y="29" width="1" height="1"/><rect x="3" y="32" width="1" height="1"/><rect x="3" y="36" width="1" height="1"/><rect x="4" y="3" width="1" height="1"/><rect x="4" y="5" width="1" height="1"/><rect x="4" y="7" width="1" height="1"/><rect x="4" y="13" width="1" height="1"/><rect x="5" y="10" width="1" height="1"/><rect x="5" y="27" width="1" height="1"/><rect x="5" y="36" width="1" height="1"/><rect x="6" y="0" width="1" height="1"/><rect x="6" y="30" width="1" height="1"/><rect x="6" y="35" width="1" height="1"/><rect x="6" y="37" width="1" height="1"/><rect x="7" y="7" width="1" height="1"/><rect x="7" y="14" width="1" height="1"/><rect x="7" y="21" width="1" height="1"/><rect x="7" y="36" width="1" height="1"/><rect x="8" y="27" width="1" height="1"/><rect x="8" y="47" width="1" height="1"/><rect x="9" y="5" width="1" height="1"/><rect x="9" y="26" width="1" height="1"/><rect x="9" y="31" width="1" height="1"/><rect x="9" y="34" width="1" height="1"/><rect x="10" y="21" width="1" height="1"/><rect x="11" y="9" width="1" height="1"/><rect x="11" y="16" width="1" height="1"/><rect x="12" y="23" width="1" height="1"/><rect x="13" y="2" width="1" height="1"/><rect x="13" y="18" width="1" height="1"/><rect x="13" y="39" width="1" height="1"/><rect x="14" y="0" width="1" height="1"/><rect x="14" y="2" width="1" height="1"/><rect x="14" y="42" width="1" height="1"/><rect x="15" y="5" width="1" height="1"/><rect x="15" y="11" width="1" height="1"/><rect x="15" y="25" width="1" height="1"/><rect x="17" y="30" width="1" height="1"/><rect x="18" y="0" width="1" height="1"/><rect x="18" y="26" width="1" height="1"/><rect x="18" y="38" width="1" height="1"/><rect x="19" y="33" width="1" height="1"/><rect x="19" y="35" width="1" height="1"/><rect x="19" y="41" width="1" height="1"/><rect x="20" y="8" width="1" height="1"/><rect x="20" y="9" width="1" height="1"/><rect x="20" y="21" width="1" height="1"/><rect x="20" y="29" width="1" height="1"/><rect x="22" y="10" width="1" height="1"/><rect x="22" y="38" width="1" height="1"/><rect x="22" y="43" width="1" height="1"/><rect x="23" y="19" width="1" height="1"/><rect x="23" y="30" width="1" height="1"/><rect x="23" y="37" width="1" height="1"/><rect x="23" y="39" width="1" height="1"/><rect x="24" y="9" width="1" height="1"/><rect x="24" y="14" width="1" height="1"/><rect x="25" y="3" width="1" height="1"/><rect x="25" y="25" width="1" height="1"/><rect x="25" y="31" width="1" height="1"/><rect x="25" y="41" width="1" height="1"/><rect x="26" y="2" width="1" height="1"/><rect x="26" y="4" width="1" height="1"/><rect x="28" y="10" width="1" height="1"/><rect x="28" y="18" width="1" height="1"/><rect x="28" y="25" width="1" height="1"/><rect x="31" y="3" width="1" height="1"/><rect x="31" y="21" width="1" height="1"/><rect x="31" y="37" width="1" height="1"/><rect x="31" y="43" width="1" height="1"/><rect x="32" y="26" width="1" height="1"/><rect x="34" y="6" width="1" height="1"/><rect x="34" y="23" width="1" height="1"/><rect x="34" y="27" width="1" height="1"/><rect x="35" y="8" width="1" height="1"/><rect x="35" y="17" width="1" height="1"/><rect x="35" y="27" width="1" height="1"/><rect x="35" y="36" width="1" height="1"/><rect x="36" y="3" width="1" height="1"/><rect x="36" y="9" width="1" height="1"/><rect x="36" y="37" width="1" height="1"/><rect x="36" y="40" width="1" height="1"/><rect x="36" y="43" width="1" height="1"/><rect x="37" y="3" width="1" height="1"/><rect x="37" y="29" width="1" height="1"/><rect x="38" y="3" width="1" height="1"/><rect x="38" y="31" width="1" height="1"/><rect x="39" y="7" width="1" height="1"/><rect x="39" y="13" width="1" height="1"/><rect x="39" y="36" width="1" height="1"/><rect x="39" y="41" width="1" height="1"/><rect x="40" y="16" width="1" height="1"/><rect x="40" y="25" width="1" height="1"/><rect x="40" y="40" width="1" height="1"/><rect x="42" y="4" width="1" height="1"/><rect x="42" y="22" width="1" height="1"/><rect x="43" y="11" width="1" height="1"/><rect x="43" y="35" width="1" height="1"/><rect x="43" y="47" width="1" height="1"/><rect x="44" y="15" width="1" height="1"/><rect x="44" y="22" width="1" height="1"/><rect x="44" y="32" width="1" height="1"/><rect x="44" y="42" width="1" height="1"/><rect x="45" y="4" width="1" height="1"/><rect x="45" y="24" width="1" height="1"/><rect x="45" y="26" width="1" height="1"/><rect x="46" y="28" width="1" height="1"/><rect x="46" y="44" width="1" height="1"/></g></pattern></defs><rect width="1904" height="1111" fill="url(#dots)"/></svg>
<div class="abs" style="left:1355px;top:352px;width:158px;height:96px;border-radius:4px;background:#50524f;box-shadow:0 1px 3px rgba(0,0,0,.35);"></div>
<div class="abs" style="left:1355px;top:412px;width:158px;height:1px;background:#e6e6e6;"></div>
<svg class="abs" style="left:1375px;top:363.5px;" width="12.6" height="12.6" viewBox="0 0 12.6 12.6"><path d="M0 12.6 L0.9 8.9 L8.0 1.8 L10.8 4.6 L3.7 11.7Z M8.9 0.9 L9.5 0.3 Q10.1 -0.2 10.7 0.3 L12.3 1.9 Q12.8 2.5 12.3 3.1 L11.7 3.7Z" fill="#f2f2f2"/></svg>
<svg class="abs" style="left:1375.4px;top:391px;" width="12" height="8" viewBox="0 0 12 8"><path d="M0 4 C2.2 -1.1 9.8 -1.1 12 4 C9.8 9.1 2.2 9.1 0 4Z M6 1.1 a2.9 2.9 0 1 0 0.01 0Z" fill="#f2f2f2" fill-rule="evenodd"/><circle cx="6" cy="4" r="1.6" fill="#f2f2f2"/></svg>
<svg class="abs" style="left:1375.3px;top:425px;" width="8.8" height="11" viewBox="0 0 8.8 11"><path d="M0 1.1 H2.6 L3.1 0 H5.7 L6.2 1.1 H8.8 V2.4 H0Z M0.6 3.1 H8.2 L7.8 10.1 Q7.7 11 6.8 11 H2 Q1.1 11 1 10.1Z" fill="#f2f2f2"/></svg>
<div class="t" id="m1" style="left:1391.20px;top:363.15px;font-size:14px;color:#f2f2f2;letter-spacing:0.522px;">Bearbeiten</div><div class="t" id="m2" style="left:1392.20px;top:387.95px;font-size:14px;color:#f2f2f2;letter-spacing:0.214px;">Vorschau</div><div class="t" id="m3" style="left:1387.80px;top:424.15px;font-size:14px;color:#f2f2f2;letter-spacing:0.25px;">Löschen</div>
<div class="abs" style="left:1329.5px;top:337px;width:213px;height:162.5px;box-sizing:border-box;border:5.4px solid #ff2a00;"></div>
</body></html>
